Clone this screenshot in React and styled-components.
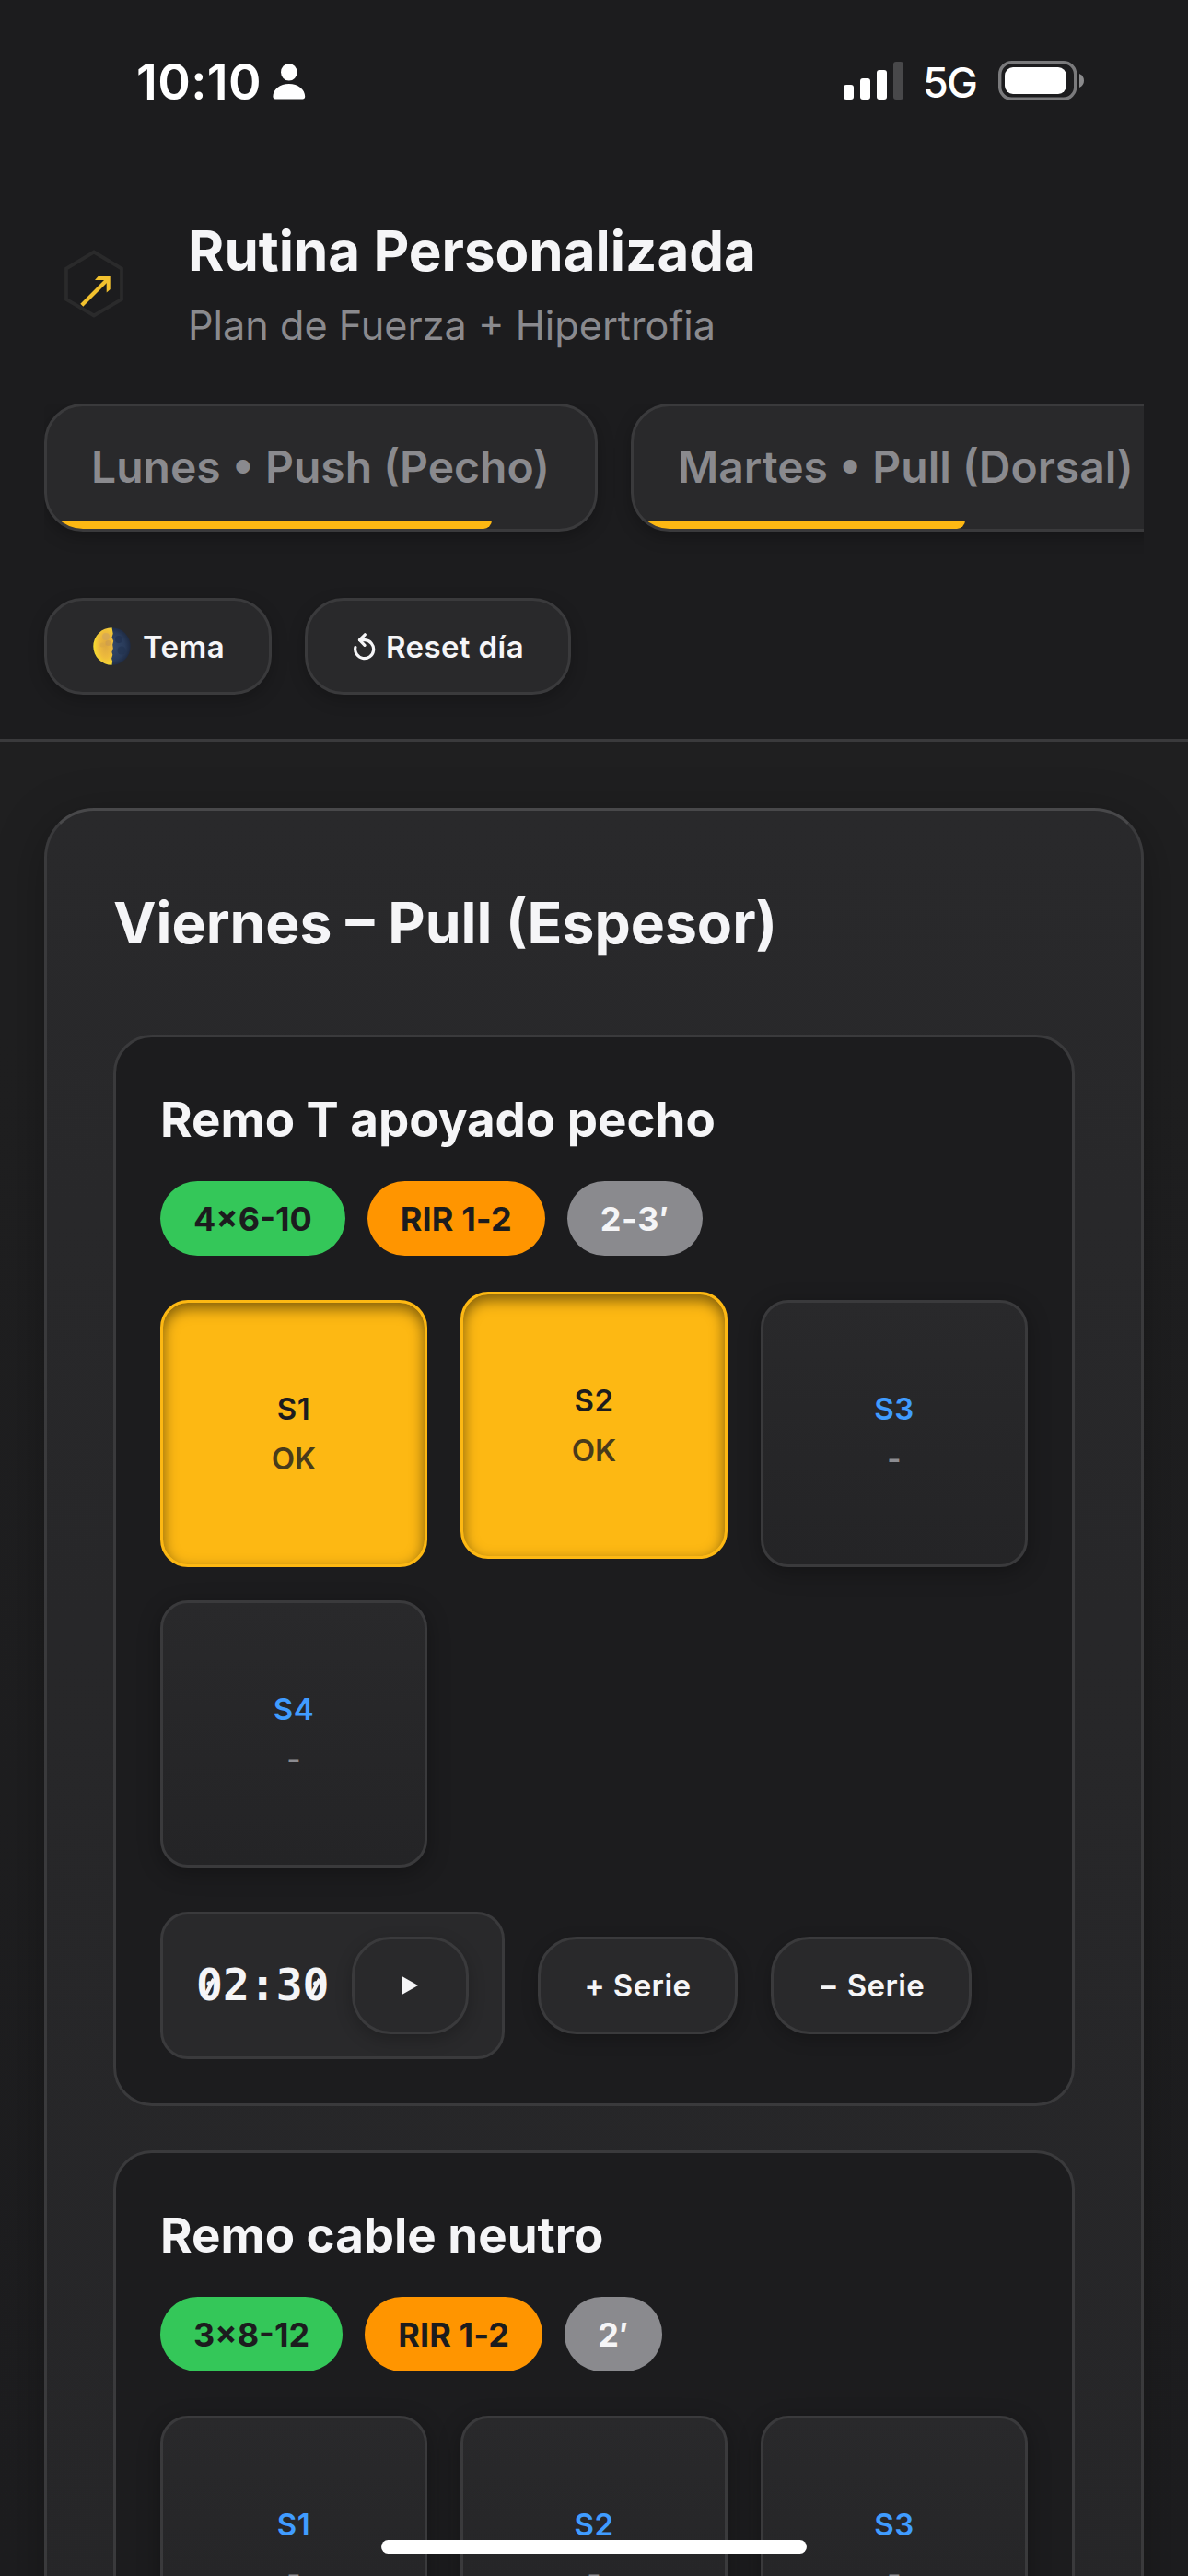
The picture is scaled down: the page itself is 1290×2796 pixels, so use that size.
import React from "react";
import styled, { createGlobalStyle, css } from "styled-components";

const color = {
  bg: "#1c1c1e",
  surface: "#29292b",
  line: "#3a3a3c",
  text: "#f5f5f7",
  muted: "#8a8a8e",
  accent: "#fdb813",
  blue: "#409cff",
  green: "#34c759",
  orange: "#ff9500",
};

const GlobalStyle = createGlobalStyle`
  *, *::before, *::after { box-sizing: border-box; }
  body {
    margin: 0;
    background: ${color.bg};
    color: ${color.text};
    font-family: Inter, "Liberation Sans", sans-serif;
  }
`;

const Screen = styled.div`
  width: 1290px;
  height: 2796px;
  overflow: hidden;
  display: flex;
  flex-direction: column;
  background: linear-gradient(180deg, #1f1f20 0%, #1f1f20 40%, #1d1d1f 100%);
`;

const Header = styled.header`
  flex: none;
  background: ${color.bg};
  border-bottom: 3px solid ${color.line};
  padding-bottom: 48px;
`;

const StatusBar = styled.div`
  height: 176px;
  padding: 0 112px 0 148px;
  display: flex;
  align-items: center;
  justify-content: space-between;
  color: #fff;
`;

const StatusGroup = styled.div`
  display: flex;
  align-items: center;
`;

const Clock = styled.span`
  width: 148px;
  font-size: 54px;
  font-weight: 600;
  letter-spacing: 0.4px;
`;

const Network = styled.span`
  width: 82px;
  font-size: 45px;
  font-weight: 500;
  letter-spacing: -1.5px;
  line-height: 60px;
  padding: 3px 0 0 0;
`;

const Signal = styled.svg`
  display: block;
  margin-right: 20px;
`;

const Brand = styled.div`
  height: 205px;
  margin-top: 57px;
  padding: 0 48px;
  display: flex;
  align-items: flex-start;
  gap: 48px;
`;

const Logo = styled.svg`
  display: block;
  width: 108px;
  height: 150px;
`;

const Title = styled.h1`
  margin: 0;
  font-size: 60px;
  line-height: 78px;
  font-weight: 700;
`;

const Subtitle = styled.p`
  margin: 7px 0 0;
  font-size: 43.2px;
  line-height: 71px;
  color: ${color.muted};
`;

const Tabs = styled.nav`
  margin: 0 48px;
  padding-bottom: 24px;
  display: flex;
  gap: 36px;
  overflow: hidden;
`;

const Tab = styled.div`
  flex: none;
  position: relative;
  overflow: hidden;
  height: 139px;
  padding: 0 49px 2px 48px;
  display: flex;
  align-items: center;
  border: 3px solid ${color.line};
  border-radius: 42px;
  background: ${color.surface};
  box-shadow: 0 6px 18px rgba(0, 0, 0, 0.25);
  color: ${color.muted};
  font-size: 48px;
  font-weight: 600;
  white-space: nowrap;
`;

const TabProgress = styled.span`
  position: absolute;
  left: 0;
  bottom: 0;
  width: ${(p) => p.$value}%;
  height: 9px;
  border-radius: 0 0 9px 9px;
  background: ${color.accent};
`;

const Toolbar = styled.div`
  margin: 48px 48px 0;
  display: flex;
  gap: 36px;
`;

const Button = styled.button`
  flex: none;
  height: ${(p) => p.$height || 105}px;
  padding: 0 48px;
  display: flex;
  align-items: center;
  border: 3px solid ${color.line};
  border-radius: 42px;
  background: ${color.surface};
  box-shadow: 0 6px 18px rgba(0, 0, 0, 0.22);
  color: ${color.text};
  font: 600 33px Inter, "Liberation Sans", sans-serif;
  letter-spacing: 0.4px;
  white-space: nowrap;
`;

const ButtonIcon = styled.svg`
  flex: none;
  display: block;
  margin-left: ${(p) => p.$before || 0}px;
  margin-right: ${(p) => p.$after || 0}px;
`;

const Main = styled.main`
  flex: none;
  padding: 72px 48px;
`;

const DayCard = styled.section`
  padding: 72px;
  border: 3px solid ${color.line};
  border-top-color: #48484a;
  border-radius: 54px;
  background: linear-gradient(180deg, #29292b 0%, #272729 40%, #262628 100%);
  box-shadow: 0 12px 54px rgba(0, 0, 0, 0.28);
`;

const DayTitle = styled.h2`
  margin: 0 0 72px;
  font-size: 62.4px;
  line-height: 99px;
  font-weight: 700;
`;

const ExerciseList = styled.div`
  display: flex;
  flex-direction: column;
  gap: 48px;
`;

const Exercise = styled.article`
  padding: 48px;
  border: 3px solid ${color.line};
  border-radius: 42px;
  background: ${color.bg};
`;

const ExerciseName = styled.h3`
  margin: 0 0 25px;
  font-size: 52.8px;
  line-height: 83px;
  font-weight: 700;
`;

const Chips = styled.div`
  display: flex;
  gap: 24px;
  margin-bottom: 48px;
`;

const chipTones = {
  volume: css`
    background: ${color.green};
    color: ${color.bg};
  `,
  effort: css`
    background: ${color.orange};
    color: ${color.bg};
    letter-spacing: 0.12px;
  `,
  rest: css`
    background: ${color.muted};
    color: ${color.text};
    letter-spacing: 0.6px;
  `,
};

const Chip = styled.span`
  height: 81px;
  padding: 0 36px;
  display: flex;
  align-items: center;
  border-radius: 42px;
  font-size: 36px;
  font-weight: 700;
  ${(p) => chipTones[p.$tone]}
`;

const SetGrid = styled.div`
  display: grid;
  grid-template-columns: repeat(3, 1fr);
  grid-auto-rows: 290px;
  gap: 36px;
  margin-bottom: 48px;
`;

const SetTile = styled.div`
  display: flex;
  flex-direction: column;
  align-items: center;
  justify-content: center;
  border: 3px solid ${color.line};
  border-radius: 30px;
  background: linear-gradient(180deg, #29292b, #242426);
  box-shadow: 0 6px 24px rgba(0, 0, 0, 0.3);
  color: ${color.blue};
  font-size: 33px;
  line-height: 54px;
  font-weight: 600;
  letter-spacing: 0.6px;
  ${(p) =>
    p.$done &&
    css`
      border-color: ${color.accent};
      background: ${color.accent};
      box-shadow: inset 0 6px 15px rgba(0, 0, 0, 0.5);
      color: ${color.bg};
    `}
  ${(p) =>
    p.$raised &&
    css`
      transform: translateY(-9px);
    `}
`;

const SetStatus = styled.span`
  letter-spacing: 0;
  color: ${(p) => (p.$done ? color.bg : "#98989d")};
  opacity: ${(p) => (p.$done ? 0.8 : 0.9)};
`;

const Controls = styled.div`
  display: flex;
  align-items: center;
  gap: 36px;
`;

const Timer = styled.div`
  height: 160px;
  padding: 0 36px;
  display: flex;
  align-items: center;
  gap: 24px;
  border: 3px solid ${color.line};
  border-radius: 30px;
  background: ${color.surface};
`;

const TimerDigits = styled.span`
  font-family: "DejaVu Sans Mono", monospace;
  font-size: 48px;
  line-height: 72px;
  font-weight: 700;
  padding-bottom: 2px;
`;

const SlashedZero = styled.span`
  position: relative;
  &::after {
    content: "";
    position: absolute;
    left: 12.5px;
    top: 21px;
    width: 4px;
    height: 18px;
    background: ${color.text};
    transform: rotate(27deg);
  }
`;

const HomeIndicator = styled.div`
  position: fixed;
  left: 414px;
  top: 2757px;
  width: 462px;
  height: 15px;
  border-radius: 8px;
  background: #fff;
`;

const PersonIcon = () => (
  <svg width="36" height="39" viewBox="0 0 36 39" fill="#fff">
    <ellipse cx="17.8" cy="9.3" rx="8.8" ry="9.3" />
    <path d="M17.8 22C8 22 .4 28.2.4 35.6c0 1.9 1 2.9 2.6 2.9h29.6c1.6 0 2.6-1 2.6-2.9C35.200 28.200 27.600 22 17.800 22Z" />
  </svg>
);

const SignalIcon = () => (
  <Signal width="66" height="42" viewBox="0 0 66 42" fill="#fff">
    <rect x="0" y="25" width="11" height="16" rx="3" />
    <rect x="18" y="18" width="11" height="23" rx="3" />
    <rect x="36" y="9" width="11" height="32" rx="3" />
    <rect x="54" y="0" width="11" height="41" rx="3" fill="#48484a" />
  </Signal>
);

const BatteryIcon = () => (
  <svg width="94" height="44" viewBox="0 0 94 44">
    <rect x="1.700" y="1.700" width="82" height="39.600" rx="13" fill="none" stroke="#7a7a7c" strokeWidth="3.400" />
    <rect x="7" y="7" width="67" height="29" rx="9" fill="#fff" />
    <path d="M88 14c3.200 1.200 5 4 5 7.500s-1.800 6.300-5 7.500Z" fill="#8a8a8c" />
  </svg>
);

const MoonIcon = () => (
  <ButtonIcon $before={2} $after={13} width="41" height="41" viewBox="0 0 41 41">
    <defs>
      <radialGradient id="lit" cx="62%" cy="46%" r="62%">
        <stop offset="0" stopColor="#dba640" />
        <stop offset="0.55" stopColor="#eebb3c" />
        <stop offset="1" stopColor="#f8de2e" />
      </radialGradient>
      <radialGradient id="dark" cx="46%" cy="50%" r="55%">
        <stop offset="0" stopColor="#34496b" />
        <stop offset="0.7" stopColor="#293b5a" />
        <stop offset="1" stopColor="#1d2941" />
      </radialGradient>
    </defs>
    <circle cx="20.500" cy="20.500" r="20.200" fill="url(#dark)" />
    <path d="M20.500.3a20.200 20.200 0 0 0 0 40.400l.6-4-1-3 1.200-4-.9-3 1.400-4-.6-4 1-4-1.700-4 1.200-4Z" fill="url(#lit)" />
    <circle cx="14" cy="10" r="4" fill="#d3a65a" opacity="0.7" />
    <circle cx="16.500" cy="17" r="3" fill="#c99a50" opacity="0.6" />
    <circle cx="10" cy="19" r="2.500" fill="#d9a645" opacity="0.6" />
    <circle cx="28" cy="13" r="4" fill="#213150" opacity="0.7" />
    <circle cx="31" cy="25" r="4.500" fill="#22324f" opacity="0.6" />
  </ButtonIcon>
);

const ResetIcon = () => (
  <ButtonIcon $before={2} $after={11} width="24" height="30" viewBox="0 0 24 30" fill="none" stroke={color.text} strokeWidth="3.200" strokeLinecap="round" strokeLinejoin="round">
    <path d="M1.900 15.500A10 10 0 1 0 12.500 7.700H6.500" />
    <path d="M12.300 1.800 6.500 7.700 12 13.400" />
  </ButtonIcon>
);

const PlayIcon = () => (
  <ButtonIcon $before={3} $after={4} width="18" height="22" viewBox="0 0 18 22">
    <path d="M0 .8 18 11 0 21.200Z" fill={color.text} />
  </ButtonIcon>
);

const exercises = [
  { name: "Remo T apoyado pecho", volume: "4×6-10", effort: "RIR 1-2", rest: "2-3′", sets: 4, done: 2, raised: 2 },
  { name: "Remo cable neutro", volume: "3×8-12", effort: "RIR 1-2", rest: "2′", sets: 3, done: 0 },
];

const ExerciseCard = ({ data }) => (
  <Exercise>
    <ExerciseName>{data.name}</ExerciseName>
    <Chips>
      <Chip $tone="volume">{data.volume}</Chip>
      <Chip $tone="effort">{data.effort}</Chip>
      <Chip $tone="rest">{data.rest}</Chip>
    </Chips>
    <SetGrid>
      {Array.from({ length: data.sets }, (_, i) => {
        const done = i < data.done;
        return (
          <SetTile key={i} $done={done} $raised={data.raised === i + 1}>
            <span>S{i + 1}</span>
            <SetStatus $done={done}>{done ? "OK" : "-"}</SetStatus>
          </SetTile>
        );
      })}
    </SetGrid>
    {data.done > 0 && (
      <Controls>
        <Timer>
          <TimerDigits>
            <SlashedZero>0</SlashedZero>2:3<SlashedZero>0</SlashedZero>
          </TimerDigits>
          <Button $height={106} aria-label="Iniciar">
            <PlayIcon />
          </Button>
        </Timer>
        <Button $height={106}>+ Serie</Button>
        <Button $height={106}>− Serie</Button>
      </Controls>
    )}
  </Exercise>
);

export default function App() {
  return (
    <Screen>
      <GlobalStyle />
      <Header>
        <StatusBar>
          <StatusGroup>
            <Clock>10:10</Clock>
            <PersonIcon />
          </StatusGroup>
          <StatusGroup>
            <SignalIcon />
            <Network>5G</Network>
            <BatteryIcon />
          </StatusGroup>
        </StatusBar>
        <Brand>
          <Logo viewBox="0 0 108 150" fill="none">
            <path d="M54 40.500 84 58.500V92L54 109.500 24 92V58.500Z" stroke="#2a2a2b" strokeWidth="3.800" />
            <path d="M40.800 98.300 69 70" stroke="#f2c12e" strokeWidth="4.200" />
            <path d="M55 71 58.500 67H71.700V81L67.700 84.500V71Z" fill="#f2c12e" />
          </Logo>
          <div>
            <Title>Rutina Personalizada</Title>
            <Subtitle>Plan de Fuerza + Hipertrofia</Subtitle>
          </div>
        </Brand>
        <Tabs>
          <Tab>
            Lunes • Push (Pecho)
            <TabProgress $value={81.25} />
          </Tab>
          <Tab>
            Martes • Pull (Dorsal)
            <TabProgress $value={60.9} />
          </Tab>
        </Tabs>
        <Toolbar>
          <Button>
            <MoonIcon />
            Tema
          </Button>
          <Button>
            <ResetIcon />
            Reset día
          </Button>
        </Toolbar>
      </Header>
      <Main>
        <DayCard>
          <DayTitle>Viernes – Pull (Espesor)</DayTitle>
          <ExerciseList>
            {exercises.map((e) => (
              <ExerciseCard key={e.name} data={e} />
            ))}
          </ExerciseList>
        </DayCard>
      </Main>
      <HomeIndicator />
    </Screen>
  );
}
